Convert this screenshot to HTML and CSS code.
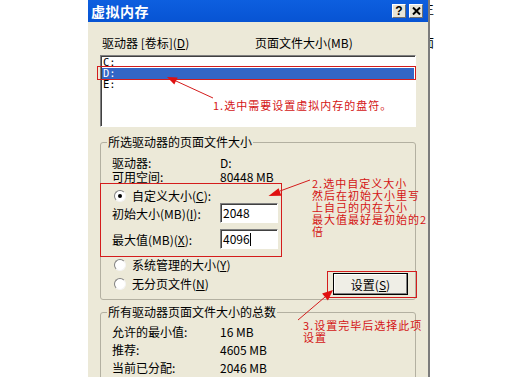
FILE: index.html
```html
<!DOCTYPE html>
<html lang="zh-CN">
<head>
<meta charset="utf-8">
<title>虚拟内存</title>
<link rel="stylesheet" href="styles.css">
</head>
<body>
<div class="screen">
  <div class="dialog">
    <div class="titlebar">
      <span class="title">虚拟内存</span>
      <span class="tbtn">?</span>
      <span class="tbtn"><svg width="9" height="8" viewBox="0 0 9 8"><path d="M1 0.5 L8 7.5 M8 0.5 L1 7.5" stroke="#000" stroke-width="2"/></svg></span>
    </div>
    <div class="content">
      <div class="listhead"><span class="col1">驱动器 [卷标](<u>D</u>)</span><span>页面文件大小(MB)</span></div>
      <div class="listbox">
        <div class="item">C:</div>
        <div class="item sel">D:</div>
        <div class="item">E:</div>
      </div>
      <div class="group g1">
        <div class="legend">所选驱动器的页面文件大小</div>
        <div class="info first"><span class="lbl">驱动器:</span><span>D:</span></div>
        <div class="info"><span class="lbl">可用空间:</span><span>80448 MB</span></div>
        <div class="radio checked custom"><span class="dot"></span>自定义大小(<u>C</u>):</div>
        <div class="field"><span class="lbl">初始大小(MB)(<u>I</u>):</span><span class="input">2048</span></div>
        <div class="field second"><span class="lbl">最大值(MB)(<u>X</u>):</span><span class="input">4096<span class="caret"></span></span></div>
        <div class="bottom">
          <div class="radios">
            <div class="radio"><span class="dot"></span>系统管理的大小(<u>Y</u>)</div>
            <div class="radio"><span class="dot"></span>无分页文件(<u>N</u>)</div>
          </div>
          <button class="btn">设置(<u>S</u>)</button>
        </div>
      </div>
      <div class="group g2">
        <div class="legend">所有驱动器页面文件大小的总数</div>
        <div class="tot first"><span class="lbl">允许的最小值:</span><span>16 MB</span></div>
        <div class="tot"><span class="lbl">推荐:</span><span>4605 MB</span></div>
        <div class="tot"><span class="lbl">当前已分配:</span><span>2046 MB</span></div>
      </div>
    </div>
  </div>
  <div class="edge"></div>
  <div class="behind"><span class="g-a">王</span><span class="g-b">面</span></div>

  <div class="notes">
    <svg class="marks" width="515" height="377" viewBox="0 0 515 377">
      <g fill="none" stroke="#d41c1c" stroke-width="1">
        <rect x="97.5" y="66.5" width="318" height="13"/>
        <rect x="100.5" y="183.5" width="181" height="73"/>
        <rect x="327.5" y="271.5" width="89" height="26"/>
        <line x1="176" y1="81" x2="213" y2="98"/>
        <line x1="280" y1="191" x2="310" y2="180"/>
        <line x1="298" y1="320" x2="325" y2="297"/>
      </g>
      <g fill="#e01010">
        <polygon points="167,77 177.7,77.4 174.3,84.6"/>
        <polygon points="268.5,196 281.4,195.8 278.6,188.2"/>
        <polygon points="333,290 327.9,300.4 322.1,293.6"/>
      </g>
    </svg>
    <div class="note n1">1.选中需要设置虚拟内存的盘符。</div>
    <div class="note n2">2.选中自定义大小<br>然后在初始大小里写<br>上自己的内在大小<br>最大值最好是初始的2<br>倍</div>
    <div class="note n3">3.设置完毕后选择此项<br>设置</div>
  </div>
</div>
</body>
</html>
```
FILE: styles.css
```css
* { box-sizing: border-box; }
html, body { margin: 0; padding: 0; }
body {
  width: 515px;
  height: 377px;
  overflow: hidden;
  background: #fff;
  font-family: "Noto Sans CJK SC", "Noto Sans", sans-serif;
  font-size: 12px;
  color: #000;
}
u { text-decoration: underline; text-underline-offset: 1px; }

.screen {
  position: relative;
  display: flex;
  height: 377px;
  padding-left: 88px;
  overflow: hidden;
}
.dialog {
  width: 340px;
  flex: none;
  background: #ece9d8;
}
.titlebar {
  height: 22px;
  display: flex;
  align-items: center;
  padding: 0 5px 0 3px;
  background: linear-gradient(#0d5fdf, #0754d3);
}
.title {
  flex: 1;
  color: #fff;
  font-weight: bold;
  font-size: 14px;
  line-height: 22px;
  letter-spacing: 0.5px;
}
.tbtn {
  width: 14px;
  height: 14px;
  margin-left: 3px;
  background: #e6e4d8;
  border: 1px solid;
  border-color: #fff #6f6f6f #6f6f6f #fff;
  display: flex;
  align-items: center;
  justify-content: center;
  font-family: "Liberation Sans", sans-serif;
  font-weight: bold;
  font-size: 12px;
  line-height: 1;
}
.content { padding: 14px 12px 0; }
.listhead {
  display: flex;
  height: 14px;
  line-height: 14px;
  margin-bottom: 5px;
  padding-left: 2px;
}
.col1 { width: 153px; }
.listbox {
  height: 72px;
  background: #fff;
  border: 1px solid;
  border-color: #808080 #fff #fff #808080;
  box-shadow: inset 1px 1px 0 #404040;
  padding: 1px 1px 0 1px;
}
.item {
  height: 11px;
  line-height: 11px;
  font-size: 10.5px;
  font-family: "DejaVu Sans Mono", monospace;
  padding-left: 1px;
}
.item.sel { background: #3366c6; color: #fff; }

.group {
  border: 1px solid #b3b0a1;
  border-radius: 3px;
  padding: 0 7px 4px 11px;
}
.g1 { margin-top: 15px; }
.g2 { margin-top: 12px; padding-bottom: 20px; }
.legend {
  width: max-content;
  margin: -8px 0 0 -5px;
  padding: 0 1px;
  height: 14px;
  line-height: 14px;
  background: #ece9d8;
}
.info, .tot {
  display: flex;
  height: 14px;
  line-height: 14px;
}
.info.first { margin-top: 7px; }
.tot { margin-top: 4px; }
.tot.first { margin-top: 6px; }
.lbl { width: 108px; flex: none; }

.radio {
  display: flex;
  align-items: center;
  height: 14px;
  line-height: 14px;
  padding-left: 2px;
}
.custom { margin-top: 5px; }
.dot {
  position: relative;
  width: 12px;
  height: 12px;
  flex: none;
  border-radius: 50%;
  background: #fff;
  border: 1px solid;
  border-color: #808080 #f4f4f4 #f4f4f4 #808080;
  margin-right: 6px;
}
.checked .dot::after {
  content: "";
  position: absolute;
  left: 3px;
  top: 3px;
  width: 4px;
  height: 4px;
  border-radius: 50%;
  background: #000;
}
.field {
  display: flex;
  align-items: center;
  height: 20px;
}
.field.second { margin-top: 6px; }
.input {
  width: 58px;
  height: 20px;
  background: #fff;
  border: 1px solid;
  border-color: #808080 #fff #fff #808080;
  box-shadow: inset 1px 1px 0 #404040;
  padding-left: 2px;
  line-height: 18px;
}
.caret {
  display: inline-block;
  width: 1px;
  height: 13px;
  background: #000;
  vertical-align: -2px;
}
.bottom {
  display: flex;
  justify-content: space-between;
  align-items: flex-end;
  margin-top: 9px;
  height: 37px;
}
.radios {
  display: flex;
  flex-direction: column;
  gap: 5px;
  align-self: flex-start;
}
.btn {
  width: 75px;
  height: 22px;
  font: inherit;
  color: #000;
  background: #efeee6;
  border: 1px solid #000;
  box-shadow: inset -1px -1px 0 #808080, inset 1px 1px 0 #fff;
  padding: 0;
}

.edge { width: 2px; flex: none; background: #7c7c7c; }
.behind {
  flex: 1;
  overflow: hidden;
  font-size: 12px;
  line-height: 12px;
}
.behind span { display: block; margin-left: -8px; }
.g-a { margin-top: 4px; }
.g-b { margin-top: 21px; }

.notes {
  position: absolute;
  left: 0;
  top: 0;
  width: 515px;
  height: 377px;
  pointer-events: none;
}
.marks { position: absolute; left: 0; top: 0; }
.note {
  position: absolute;
  color: #d41414;
  font-size: 11px;
  letter-spacing: 1px;
  line-height: 12px;
  white-space: nowrap;
}
.n1 { left: 213px; top: 99px; }
.n2 { left: 312px; top: 177px; }
.n3 { left: 303px; top: 319px; }
```
